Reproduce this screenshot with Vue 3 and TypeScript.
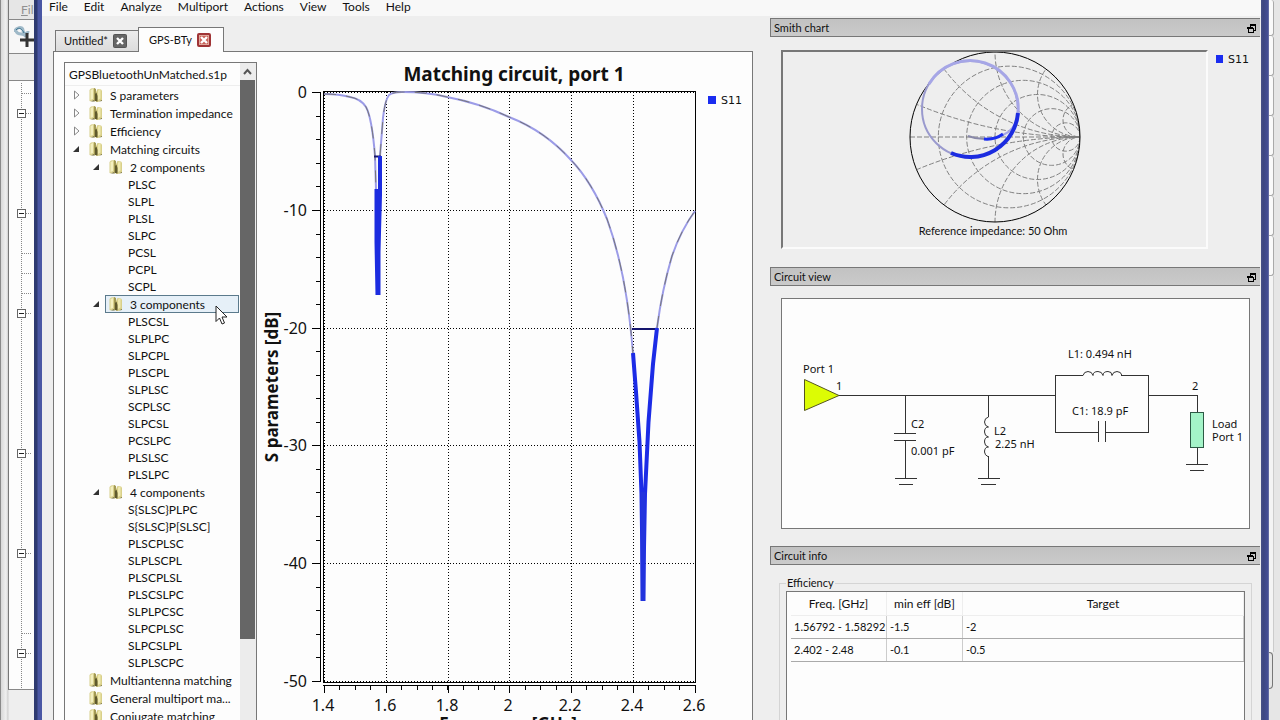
<script setup lang="ts">
interface TreeRow {
  label: string
  kind: 'closed' | 'open' | 'plain' | 'sub' | 'leaf'
  selected?: boolean
}

const menus: string[] = ['File', 'Edit', 'Analyze', 'Multiport', 'Actions', 'View', 'Tools', 'Help']

const leaves = (names: string): TreeRow[] =>
  names.split(' ').map((label) => ({ label, kind: 'leaf' }))

const rows: TreeRow[] = [
  { label: 'S parameters', kind: 'closed' },
  { label: 'Termination impedance', kind: 'closed' },
  { label: 'Efficiency', kind: 'closed' },
  { label: 'Matching circuits', kind: 'open' },
  { label: '2 components', kind: 'sub' },
  ...leaves('PLSC SLPL PLSL SLPC PCSL PCPL SCPL'),
  { label: '3 components', kind: 'sub', selected: true },
  ...leaves('PLSCSL SLPLPC SLPCPL PLSCPL SLPLSC SCPLSC SLPCSL PCSLPC PLSLSC PLSLPC'),
  { label: '4 components', kind: 'sub' },
  ...leaves('S{SLSC}PLPC S{SLSC}P[SLSC] PLSCPLSC SLPLSCPL PLSCPLSL PLSCSLPC SLPLPCSC SLPCPLSC SLPCSLPL SLPLSCPC'),
  { label: 'Multiantenna matching', kind: 'plain' },
  { label: 'General multiport ma...', kind: 'plain' },
  { label: 'Conjugate matching', kind: 'plain' },
]

// Plot scales
const fx = (f: number): number => Math.round(67 + (f - 1.4) * 308.75)
const fy = (db: number): number => Math.round(40.3 - db * 11.77)

const xTicks = [1.4, 1.6, 1.8, 2, 2.2, 2.4, 2.6]
const yTicks = [0, -10, -20, -30, -40, -50]
const xMinor = Array.from({ length: 25 }, (_, i) => 1.4 + i * 0.05)
const yMinor = Array.from({ length: 26 }, (_, i) => -i * 2)

const curve =
  'M67 42Q82 42 93 45Q104 47 109 55Q115 66 118 104L119 138M123 104L126 66Q128 48 132 43Q136 40 145 40Q170 40 190 45Q222 51 252 65Q288 79 314 108Q335 130 350 167Q370 222 376 302M400 276Q405 238 415 204Q424 178 438 159'

// Smith chart grid on a unit circle of radius 85
const R = 85
const resistance = [0.2, 0.5, 1, 2, 5].map((r) => ({ cx: (R * r) / (1 + r), r: R / (1 + r) }))
const reactance = [0.2, 0.5, 1, 2, 5, -0.2, -0.5, -1, -2, -5].map((x) => ({
  cy: -R / x,
  r: Math.abs(R / x),
}))

// Outline nodes of the window behind
const nodes = [113, 213, 313, 453, 553, 653]
const twigs = [93, 253, 273, 293, 633]

const efficiency = [
  { freq: '1.56792 - 1.58292', min: '-1.5', target: '-2' },
  { freq: '2.402 - 2.48', min: '-0.1', target: '-0.5' },
]
</script>

<template>
  <div class="desktop">
    <aside class="behind">
      <div class="behind-menu"><u>F</u>il</div>
      <div class="behind-tools">
        <svg width="20" height="24" viewBox="0 0 20 24">
          <path d="M1 7C1 2 9 1 9 5S14 10 14 6M2 6c2 6 8 0 10 6" fill="none" stroke="#9fb9c8" stroke-width="3" />
          <path d="M2 5c3-4 7 0 8 3" fill="none" stroke="#3c7490" stroke-width="1" />
          <path d="M13 8v14M6 15h14" stroke="#333" stroke-width="3" />
        </svg>
      </div>
      <div class="behind-gap"></div>
      <div class="behind-tree">
        <svg width="25" height="608" viewBox="8 81 25 608" shape-rendering="crispEdges">
          <path d="M20.5 83V688" stroke="#888" stroke-dasharray="1 1" />
          <path v-for="t in twigs" :key="t" :d="`M21 ${t}.5h10`" stroke="#888" stroke-dasharray="1 1" />
          <g v-for="n in nodes" :key="n">
            <path :d="`M25 ${n}.5h6`" stroke="#888" stroke-dasharray="1 1" />
            <rect x="16.5" :y="n - 3.5" width="8" height="8" fill="#fff" stroke="#666" />
            <path :d="`M18 ${n}.5h5`" stroke="#222" />
          </g>
        </svg>
      </div>
    </aside>

    <div class="edge"></div>

    <main class="window">
      <nav class="menubar">
        <button v-for="m in menus" :key="m" type="button">{{ m }}</button>
      </nav>

      <div class="workspace">
        <section class="documents">
          <div class="tabs">
            <div class="tab">
              <button type="button" class="tab-name">Untitled*</button>
              <button type="button" class="close" aria-label="Close Untitled">
                <svg width="14" height="14" viewBox="0 0 14 14">
                  <rect x="0.5" y="0.5" width="13" height="13" rx="1" fill="#666" stroke="#555" />
                  <path d="M4 4l6 6M10 4l-6 6" stroke="#fff" stroke-width="2.4" />
                </svg>
              </button>
            </div>
            <div class="tab active">
              <button type="button" class="tab-name">GPS-BTy</button>
              <button type="button" class="close" aria-label="Close GPS-BTy">
                <svg width="14" height="14" viewBox="0 0 14 14">
                  <rect x="1" y="1" width="12" height="12" rx="1" fill="#c9635a" stroke="#a03436" stroke-width="2" />
                  <rect x="2.5" y="2.5" width="9" height="9" fill="none" stroke="#e0a89c" />
                  <path d="M4 4l6 6M10 4l-6 6" stroke="#fff" stroke-width="2.4" />
                </svg>
              </button>
            </div>
          </div>

          <div class="pane">
            <div class="tree">
              <div class="tree-main">
                <div class="tree-head">GPSBluetoothUnMatched.s1p</div>
                <div
                  v-for="row in rows"
                  :key="row.label"
                  class="row"
                  :class="[row.kind, { selected: row.selected }]"
                >
                  <span v-if="row.kind !== 'leaf'" class="arrow">
                    <svg v-if="row.kind !== 'plain'" width="8" height="10" viewBox="0 0 8 10">
                      <path v-if="row.kind === 'closed'" d="M2.5 1v8L7 5z" fill="#fff" stroke="#888" />
                      <path v-else d="M7 2v6H1z" fill="#333" />
                    </svg>
                  </span>
                  <span class="item">
                    <svg v-if="row.kind !== 'leaf'" width="14" height="16" viewBox="0 0 14 16">
                      <path d="M0.500 3L2 1.500L6 1v12L2 14.500L0.500 14z" fill="#d8cf8c" />
                      <path d="M1.500 3L4 2v10L1.500 13z" fill="#f4f0c0" />
                      <path d="M5 1l2 1v11l-2 2z" fill="#a39a55" />
                      <path d="M7 5l1.500-3L12 2.500l1 1v10L9 15H7z" fill="#d9d08a" />
                      <path d="M9 3.500l2.500-1v9L9 13z" fill="#f0eab0" />
                      <path d="M6 7l1.500-1.500L8.500 9v5.500L6 14z" fill="#5f592c" />
                      <path d="M2 14.500L5 13v1.500zM10 14.500l3-1.500v1z" fill="#6e6838" />
                    </svg>
                    <span class="label">{{ row.label }}</span>
                  </span>
                </div>
              </div>
              <div class="scrollbar">
                <svg width="15" height="17" viewBox="0 0 15 17">
                  <path d="M4 11l3.500-4L11 11" fill="none" stroke="#555" stroke-width="2" />
                </svg>
                <div class="thumb"></div>
              </div>
            </div>

            <svg class="chart" viewBox="0 0 495 668" preserveAspectRatio="xMinYMin meet">
              <text x="257" y="29" class="title" text-anchor="middle">Matching circuit, port 1</text>
              <text class="axis" text-anchor="middle" transform="translate(21 335) rotate(-90)">S parameters [dB]</text>
              <text x="251" y="678" class="axis" text-anchor="middle">Frequency [GHz]</text>

              <g stroke="#000" shape-rendering="crispEdges">
                <path v-for="f in xTicks" :key="'gx' + f" :d="`M${fx(f)}.500 40V630`" stroke-dasharray="1 2" />
                <path v-for="d in yTicks" :key="'gy' + d" :d="`M67 ${fy(d)}.500H438`" stroke-dasharray="1 2" />
                <rect x="66.500" y="39.500" width="372" height="591" fill="none" />
                <path d="M63.500 40V630M66 633.500H439" />
                <path v-for="d in yTicks" :key="'ty' + d" :d="`M55 ${fy(d)}.500h8`" />
                <path v-for="d in yMinor" :key="'my' + d" :d="`M59 ${fy(d)}.500h4`" />
                <path v-for="f in xTicks" :key="'tx' + f" :d="`M${fx(f)}.500 633v8`" />
                <path v-for="f in xMinor" :key="'mx' + f" :d="`M${fx(f)}.500 633v5`" />
              </g>
              <text v-for="d in yTicks" :key="'ly' + d" x="50" :y="fy(d) + 6" class="tick" text-anchor="end">{{ d }}</text>
              <text v-for="f in xTicks" :key="'lx' + f" :x="fx(f) - 1" y="659" class="tick" text-anchor="middle">{{ f }}</text>

              <g fill="none" stroke-linejoin="round">
                <path class="trace" :d="curve" />
                <path class="trace-dash" :d="curve" />
                <path d="M117 104.500h7M375 277h25" stroke="#15156e" stroke-width="2" />
                <path d="M119.500 137V190L120.500 243M123 104V143L121.500 200V243" stroke="#1c2ce0" stroke-width="4" />
                <path d="M376 301L379 340L382.500 390L384.500 442L386 549M400 276L396 312L391.500 370L388 442L386 549" stroke="#1c2ce6" stroke-width="4" />
                <path d="M386 440V549" stroke="#2233dd" stroke-width="5" />
              </g>
              <rect x="451" y="44" width="8" height="8" fill="#1a2cf0" />
              <text x="464" y="52" class="legend">S11</text>
            </svg>
          </div>
        </section>

        <section class="docks">
          <header class="dock-title">
            <span>Smith chart</span>
            <button type="button" aria-label="Float Smith chart">
              <svg width="9" height="9" viewBox="0 0 9 9" shape-rendering="crispEdges">
                <path d="M3 1h5.500v5H6M1 4h5v4H1zM3 1v3" fill="none" stroke="#000" stroke-width="1" />
                <path d="M3 1h6M0 4h6" stroke="#000" stroke-width="2" />
              </svg>
            </button>
          </header>
          <div class="smith">
            <div class="smith-frame">
              <svg width="180" height="192" viewBox="-90 -85 180 192">
                <defs>
                  <clipPath id="disc"><circle r="85" /></clipPath>
                </defs>
                <g fill="none" stroke="#808080" stroke-dasharray="5 2" clip-path="url(#disc)">
                  <circle v-for="c in resistance" :key="'r' + c.cx" :cx="c.cx" cy="0" :r="c.r" />
                  <circle v-for="c in reactance" :key="'x' + c.cy" :cx="85" :cy="c.cy" :r="c.r" />
                  <path d="M-85 0H85" />
                </g>
                <circle r="85" fill="none" stroke="#000" />
                <g fill="none">
                  <circle cx="-25" cy="-28" r="48" stroke="#9a9ace" stroke-width="2" />
                  <path d="M-66-53A48 48 0 0 1 23-24" stroke="#a6a6e6" stroke-width="3" />
                  <path d="M22-20Q20-7 8-2" stroke="#a6a6e6" stroke-width="2" />
                  <path d="M-10 2L-20 1L-27-1" stroke="#8888a8" stroke-width="2" />
                  <path d="M8-3Q0 3-11 2" stroke="#1a2cf0" stroke-width="3" />
                  <path d="M-44 16A48 48 0 0 0 23-24" stroke="#1c2ce0" stroke-width="4" />
                </g>
                <text x="-2" y="98" class="ref" text-anchor="middle">Reference impedance: 50 Ohm</text>
              </svg>
            </div>
            <div class="smith-legend"><i></i>S11</div>
          </div>

          <header class="dock-title">
            <span>Circuit view</span>
            <button type="button" aria-label="Float Circuit view">
              <svg width="9" height="9" viewBox="0 0 9 9" shape-rendering="crispEdges">
                <path d="M3 1h5.500v5H6M1 4h5v4H1zM3 1v3" fill="none" stroke="#000" stroke-width="1" />
                <path d="M3 1h6M0 4h6" stroke="#000" stroke-width="2" />
              </svg>
            </button>
          </header>
          <div class="circuit">
            <svg width="467" height="229" viewBox="782 299 467 229">
              <g fill="none" stroke="#333" shape-rendering="crispEdges">
                <path d="M839 395.500H1055M905.500 395V433M894 433.500h22M894 440.500h22M905.500 440V478M895 478.500h22M899 484.500h14" />
                <path d="M988.500 395V417M988.500 456V478M978 478.500h22M981 484.500h15" />
                <path d="M1083 375.500H1055.500V432.500H1098M1098.500 421v21M1105.500 421v21M1105 432.500H1148.500V375.500H1121" />
                <path d="M1148 395.500H1197.500V412M1197.500 447V464M1186 464.500h22M1190 470.500h14" />
              </g>
              <g fill="none" stroke="#333">
                <path d="M1083 375.500q1-4 5-4q4 0 5 4q0-4 5-4q4 0 5 4q0-4 5-4q4 0 4 4q1-4 5-4q4 0 5 4" />
                <path d="M988.500 417q-4 1-4 5q0 4 4 5q-4 0-4 5q0 4 4 5q-4 0-4 5q0 4 4 5q-4 0-4 5q0 3 4 5" />
              </g>
              <path d="M804.500 379.500V410.500L839 395.500z" fill="#dcfc04" stroke="#555520" />
              <rect x="1190.500" y="412.500" width="13" height="35" fill="#a4f4c8" stroke="#2d5a45" />
              <g class="part">
                <text x="803" y="373">Port 1</text>
                <text x="836" y="390">1</text>
                <text x="911" y="428">C2</text>
                <text x="911" y="455">0.001 pF</text>
                <text x="994" y="435">L2</text>
                <text x="995" y="448">2.25 nH</text>
                <text x="1068" y="358">L1: 0.494 nH</text>
                <text x="1072" y="415">C1: 18.9 pF</text>
                <text x="1192" y="390">2</text>
                <text x="1212" y="428">Load</text>
                <text x="1212" y="441">Port 1</text>
              </g>
            </svg>
          </div>

          <header class="dock-title">
            <span>Circuit info</span>
            <button type="button" aria-label="Float Circuit info">
              <svg width="9" height="9" viewBox="0 0 9 9" shape-rendering="crispEdges">
                <path d="M3 1h5.500v5H6M1 4h5v4H1zM3 1v3" fill="none" stroke="#000" stroke-width="1" />
                <path d="M3 1h6M0 4h6" stroke="#000" stroke-width="2" />
              </svg>
            </button>
          </header>
          <fieldset class="info">
            <legend>Efficiency</legend>
            <div class="grid">
              <table>
                <thead>
                  <tr><th class="c1">Freq. [GHz]</th><th class="c2">min eff [dB]</th><th>Target</th></tr>
                </thead>
                <tbody>
                  <tr v-for="e in efficiency" :key="e.freq">
                    <td>{{ e.freq }}</td><td>{{ e.min }}</td><td>{{ e.target }}</td>
                  </tr>
                </tbody>
              </table>
            </div>
          </fieldset>
        </section>
      </div>
    </main>

    <div class="edge right"></div>

    <aside class="beyond">
      <div class="slot first"></div>
      <div v-for="n in 6" :key="n" class="slot"></div>
      <div class="rest"></div>
      <div class="knob"></div>
    </aside>

    <svg class="cursor" width="13" height="21" viewBox="0 0 13 21">
      <path d="M1 1v15.500l3.500-3.500 2.500 6 2.500-1-2.500-6H12z" fill="#fff" stroke="#222" />
    </svg>
  </div>
</template>

<style>
body {
  background: #eee;
}
</style>

<style scoped>
.desktop {
  position: relative;
  display: flex;
  height: 100vh;
  overflow: hidden;
  background: #eee;
  color: #111;
  font: 12px/16px Lato, 'Open Sans', sans-serif;
}
button {
  padding: 0;
  border: 0;
  background: none;
  color: inherit;
  font: inherit;
}
svg {
  display: block;
  flex: none;
}

.behind {
  display: flex;
  flex-direction: column;
  flex: none;
  box-sizing: border-box;
  width: 34px;
  padding-left: 7px;
  border-left: 1px solid #8a8a8a;
  background: linear-gradient(90deg, #d8d8d8, #f0f0f0 5px, #cfcfcf 7px, #eee 8px);
}
.behind > div {
  box-sizing: border-box;
  border-left: 1px solid #777;
  border-bottom: 1px solid #888;
  overflow: hidden;
}
.behind-menu {
  height: 20px;
  padding: 2px 0 0 12px;
  background: #e6e6e6;
  color: #909090;
}
.behind-tools {
  height: 34px;
  padding: 5px 0 0 5px;
  background: #f7f7f7;
}
.behind-gap {
  height: 27px;
  background: #ececec;
}
.behind-tree {
  height: 609px;
  background: #fdfdfd;
}

.edge {
  flex: none;
  width: 8px;
  background: linear-gradient(90deg, #2e3a70 3px, #4a57a4 4px);
}
.edge.right {
  background: linear-gradient(90deg, #454f86 1px, #3c4680 2px, #454f96 7px, #7c84b0);
}

.window {
  display: flex;
  flex-direction: column;
  flex: 1;
  min-width: 0;
}
.menubar {
  display: flex;
  flex: none;
  gap: 16px;
  box-sizing: border-box;
  height: 16px;
  padding: 0 7px;
  background: #f8f8f8;
}
.menubar button {
  height: 14px;
  line-height: 14px;
}

.workspace {
  display: flex;
  flex: 1;
  gap: 17px;
  min-height: 0;
  padding-left: 11px;
}
.documents {
  display: flex;
  flex-direction: column;
  flex: 700;
  min-width: 0;
}
.tabs {
  display: flex;
  align-items: flex-end;
  flex: none;
  height: 35px;
  padding-left: 2px;
}
.tab {
  display: flex;
  align-items: center;
  justify-content: center;
  gap: 5px;
  box-sizing: border-box;
  width: 83px;
  height: 21px;
  padding-right: 3px;
  border: 1px solid #777;
  border-width: 1px 0 0 1px;
  background: linear-gradient(#ececec, #dcdcdc);
  font-size: 11px;
}
.tab.active {
  position: relative;
  z-index: 1;
  width: 86px;
  height: 25px;
  margin-bottom: -1px;
  padding-right: 2px;
  border-width: 1px 1px 0;
  background: #fdfdfd;
}
.pane {
  display: flex;
  flex: 1;
  min-height: 0;
  border: 1px solid #777;
  border-bottom: 0;
  background: #fdfdfd;
}
.tree {
  display: flex;
  flex: none;
  box-sizing: border-box;
  width: 193px;
  margin: 10px 0 0 10px;
  border: 1px solid #777;
  border-bottom: 0;
  overflow: hidden;
}
.tree-main {
  flex: 1;
  min-width: 0;
  white-space: nowrap;
}
.tree-head {
  box-sizing: border-box;
  height: 23px;
  padding-left: 4px;
  border-bottom: 1px solid #eee;
  line-height: 23px;
}
.row {
  display: flex;
  height: 18px;
  line-height: 18px;
  padding-left: 7px;
}
.row.sub {
  padding-left: 27px;
}
.row.leaf {
  height: 17px;
  line-height: 17px;
  padding-left: 63px;
}
.arrow {
  display: flex;
  align-items: center;
  flex: none;
  width: 13px;
}
.item {
  display: flex;
  flex: 1;
  align-items: center;
  gap: 7px;
  padding-left: 4px;
}
.label {
  padding-top: 2px;
}
.leaf .item {
  padding-left: 0;
}
.leaf .label {
  padding-top: 0;
}
.selected .item {
  margin-right: 1px;
  background: #e6f0f8;
  box-shadow: inset 0 0 0 1px #5b7a8c;
}
.scrollbar {
  display: flex;
  flex-direction: column;
  flex: none;
  width: 16px;
  background: #ececec;
}
.thumb {
  height: 559px;
  margin-right: 1px;
  background: #666;
}
.chart {
  flex: 1;
  min-width: 0;
  height: 668px;
  overflow: hidden;
}
.chart text {
  fill: #111;
}
.chart .title {
  font: bold 19px 'Noto Sans', sans-serif;
}
.chart .axis {
  font: bold 17px 'Noto Sans', sans-serif;
}
.chart .tick {
  font: 16px 'Noto Sans', sans-serif;
}
.chart .legend {
  font: 11px 'DejaVu Sans', sans-serif;
}
.trace {
  stroke: #9c9ce8;
  stroke-width: 2;
}
.trace-dash {
  stroke: #777;
  stroke-width: 1;
  stroke-dasharray: 12 10;
}

.docks {
  display: flex;
  flex-direction: column;
  flex: 490;
  min-width: 0;
  padding: 2px 1px 0 0;
}
.dock-title {
  display: flex;
  align-items: center;
  justify-content: space-between;
  flex: none;
  box-sizing: border-box;
  height: 19px;
  padding: 1px 4px 0 3px;
  border: 1px solid #777;
  border-right: 0;
  background: linear-gradient(#c2c2c2, #cacaca);
  font-size: 11px;
}
.smith {
  display: flex;
  flex: none;
  height: 230px;
  padding: 13px 11px 0;
  box-sizing: border-box;
}
.smith-frame {
  display: flex;
  justify-content: center;
  flex: 1;
  box-sizing: border-box;
  height: 199px;
  border: 2px solid;
  border-color: #777 #fbfbfb #fbfbfb #777;
}
.smith-frame text.ref {
  font: 11px Lato, sans-serif;
  fill: #111;
}
.smith-legend {
  display: flex;
  align-items: center;
  gap: 5px;
  width: 33px;
  height: 18px;
  padding-left: 8px;
  font: 11px 'DejaVu Sans', sans-serif;
}
.smith-legend i {
  width: 8px;
  height: 8px;
  background: #1a2cf0;
}
.circuit {
  flex: none;
  box-sizing: border-box;
  height: 231px;
  margin: 12px 10px 17px 11px;
  border: 1px solid #777;
  background: #fdfdfd;
}
.part {
  font: 11px 'Noto Sans', sans-serif;
  fill: #111;
}
.info {
  display: flex;
  flex: 1;
  min-width: 0;
  min-height: 0;
  margin: 10px 8px 0 9px;
  padding: 0 6px;
  border: 1px solid #d4d4d4;
  border-bottom: 0;
}
.info legend {
  padding: 0 1px;
  font-size: 11px;
}
.grid {
  height: 100%;
  flex: 1;
  padding-left: 4px;
  border: 1px solid #777;
  background: #fdfdfd;
}
table {
  width: 100%;
  border-collapse: collapse;
  table-layout: fixed;
}
th {
  height: 23px;
  padding: 0;
  border-right: 1px solid #eee;
  border-bottom: 1px solid #eee;
  font-weight: normal;
  text-align: center;
}
td {
  height: 22px;
  padding: 0 0 0 3px;
  border-right: 1px solid #ccc;
  border-bottom: 1px solid #aaa;
  font-size: 11px;
  white-space: nowrap;
}
.c1 {
  width: 95px;
}
.c2 {
  width: 75px;
}

.beyond {
  flex: none;
  width: 11px;
  background: #e6e6e6;
}
.slot {
  box-sizing: border-box;
  width: 5px;
  height: 40px;
  border: 1px solid #aaa;
  border-width: 0 1px 1px 0;
  border-radius: 0 3px 3px 0;
  background: #fafafa;
}
.slot.first {
  height: 36px;
}
.rest {
  width: 4px;
  height: 376px;
  border-right: 1px solid #ccc;
  background: #f4f4f4;
}
.knob {
  box-sizing: border-box;
  width: 4px;
  height: 37px;
  border: 1px solid #777;
  border-left: 0;
  border-radius: 0 4px 4px 0;
}
.cursor {
  position: absolute;
  left: 215px;
  top: 305px;
}
</style>
